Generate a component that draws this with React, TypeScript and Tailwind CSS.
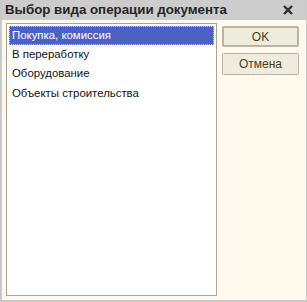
const items = ["Покупка, комиссия", "В переработку", "Оборудование", "Объекты строительства"];

export default function App() {
  return (
    <div className="flex h-[302px] w-[307px] flex-col border-b-2 border-l-2 border-r border-[#c9c9c9] bg-[#fffaed] font-['Liberation_Sans',sans-serif]">
      <div className="flex h-[20px] shrink-0 items-center justify-between bg-[#cccccc] pl-[3px] pr-[13px]">
        <span className="text-[13.3px] font-bold text-[#262626]">Выбор вида операции документа</span>
        <svg width="10" height="10" viewBox="0 0 10 10">
          <path d="M1 1 L9 9 M9 1 L1 9" stroke="#2e2e2e" strokeWidth="2.4" />
        </svg>
      </div>
      <div className="flex flex-1 gap-[5px] pl-[4px] pt-[3px] pb-[4px]">
        <div className="w-[211px] border border-[#a9a68f] bg-white p-[2px]">
          {items.map((item, i) => (
            <div
              key={item}
              className={
                i === 0
                  ? "flex h-[19px] items-center border border-dotted border-[#c8ccf0] bg-[#4d61c4] pl-[2px] text-[11.4px] text-white"
                  : "flex h-[19.3px] items-center pl-[3px] text-[11.4px] text-[#111111]"
              }
            >
              {item}
            </div>
          ))}
        </div>
        <div className="flex flex-col gap-[6px] pt-[3px]">
          <button className="flex h-[21px] w-[77px] items-center justify-center rounded-[2px] border-2 border-[#b9b5a0] bg-[#efebdf] text-[12px] text-[#4b3d1c]">
            OK
          </button>
          <button className="flex h-[22px] w-[77px] items-center justify-center rounded-[2px] border border-[#b9b5a0] bg-[#efebdf] text-[12px] text-[#4b3d1c]">
            Отмена
          </button>
        </div>
      </div>
    </div>
  );
}
